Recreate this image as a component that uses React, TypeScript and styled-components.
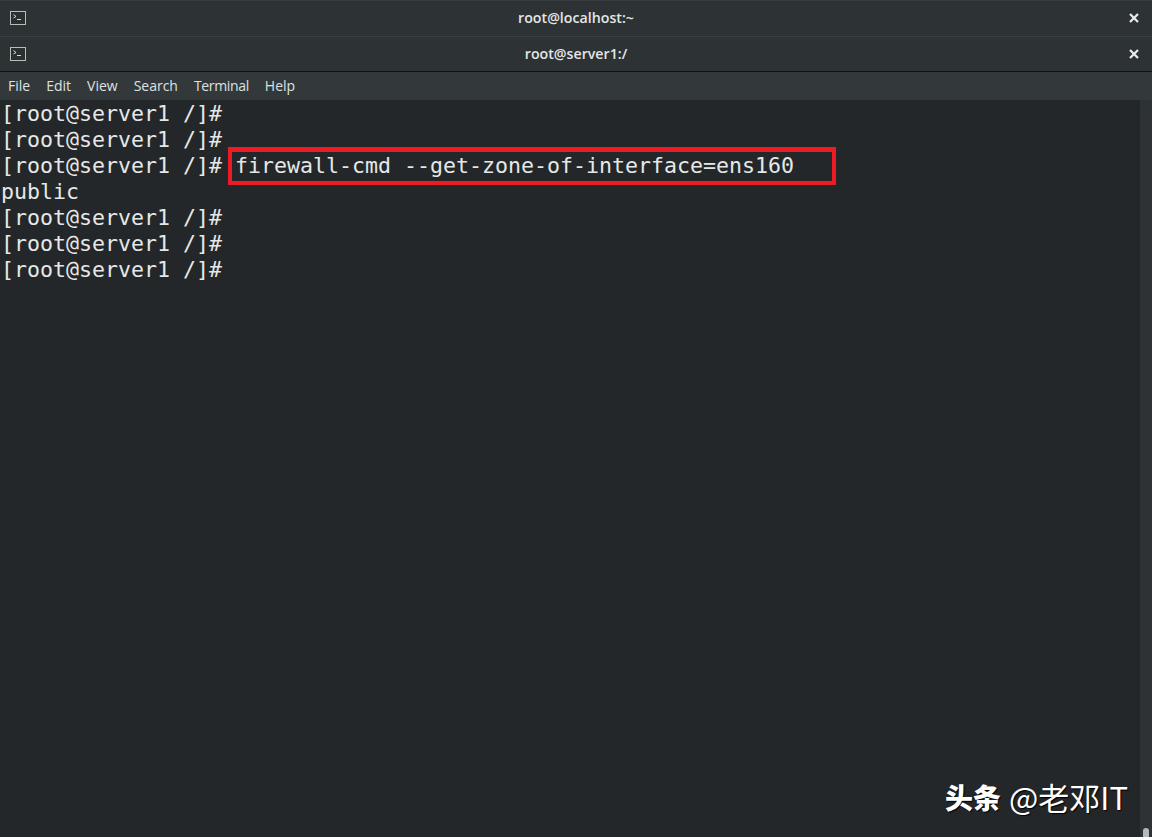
import styled, { createGlobalStyle } from "styled-components";

const Global = createGlobalStyle`
  html, body { margin: 0; padding: 0; background: #232729; }
  #root { height: 837px; overflow: hidden; }
`;

const Page = styled.div`
  width: 1152px;
  height: 837px;
  display: flex;
  flex-direction: column;
  font-family: "Open Sans", "Noto Sans", sans-serif;
  overflow: hidden;
`;

const TitleBar = styled.div<{ $last?: boolean }>`
  height: 36px;
  box-sizing: border-box;
  padding-bottom: 2px;
  flex: none;
  display: flex;
  align-items: center;
  justify-content: center;
  position: relative;
  background: #2d3235;
  border-top: 1px solid ${({ $last }) => ($last ? "#3a3f41" : "#363b3d")};
  border-bottom: ${({ $last }) => ($last ? "1px solid #0f1112" : "none")};
  color: #e4e6e6;
  font-size: 14.2px;
  font-weight: 600;
`;

const AppIcon = styled.svg`
  position: absolute;
  left: 10px;
  top: 9px;
`;

const CloseIcon = styled.svg`
  position: absolute;
  right: 13px;
  top: 12px;
`;

const MenuBar = styled.div`
  height: 28px;
  box-sizing: border-box;
  padding: 0 0 2px 8px;
  flex: none;
  display: flex;
  align-items: center;
  gap: 16px;
  background: #33393b;
  color: #dfe1e1;
  font-size: 14px;
`;

const MenuItem = styled.span<{ $tight?: boolean }>`
  letter-spacing: ${({ $tight }) => ($tight ? "-0.35px" : "0")};
`;

const Body = styled.div`
  flex: 1;
  display: flex;
  min-height: 0;
`;

const Terminal = styled.div`
  flex: 1;
  position: relative;
  background: #232729;
  padding: 1px 0 0 1px;
  color: #e6e8e8;
  font-family: "DejaVu Sans Mono", monospace;
  font-size: 21.6px;
  line-height: 26px;
  white-space: pre;
`;

const Line = styled.div`
  height: 26px;
`;

const Highlight = styled.div`
  position: absolute;
  left: 228px;
  top: 47px;
  width: 608px;
  height: 38px;
  box-sizing: border-box;
  border: 4px solid #ed1c24;
  border-top-width: 5px;
`;

const Scrollbar = styled.div`
  width: 12px;
  flex: none;
  position: relative;
  background: #2d3235;
`;

const Thumb = styled.div`
  position: absolute;
  left: 3px;
  bottom: 0;
  width: 6px;
  height: 9px;
  border-radius: 3px 3px 0 0;
  background: #b6b9ba;
`;

const Watermark = styled.div`
  position: absolute;
  right: 12px;
  bottom: 21px;
  display: flex;
  align-items: center;
  gap: 8px;
  color: #fff;
  font-family: "Noto Sans CJK SC", "Noto Sans", sans-serif;
  font-size: 31px;
  line-height: 38px;
  text-shadow: 1px 1px 1px #000;
`;

const WatermarkBrand = styled.span`
  font-weight: 900;
  font-size: 28px;
`;

const TermIcon = () => (
  <AppIcon width="16" height="15" viewBox="0 0 16 15">
    <rect x="0.5" y="1.5" width="15" height="13" fill="#2a2f30" stroke="#b9bcbc" />
    <path d="M3.5 4.5 L6 6.5 L3.5 8" fill="none" stroke="#d8dad9" strokeWidth="1" />
    <path d="M7 9.5 H11" stroke="#d8dad9" strokeWidth="1" />
  </AppIcon>
);

const Close = () => (
  <CloseIcon width="10" height="10" viewBox="0 0 10 10">
    <path d="M1 1 L9 9 M9 1 L1 9" stroke="#eceeee" strokeWidth="2.2" />
  </CloseIcon>
);

const prompt = "[root@server1 /]#";
const menus = ["File", "Edit", "View", "Search", "Terminal", "Help"];

export default function App() {
  return (
    <Page>
      <Global />
      <TitleBar>
        <TermIcon />
        root@localhost:~
        <Close />
      </TitleBar>
      <TitleBar $last>
        <TermIcon />
        root@server1:/
        <Close />
      </TitleBar>
      <MenuBar>
        {menus.map((m) => (
          <MenuItem key={m} $tight={m === "Terminal"}>{m}</MenuItem>
        ))}
      </MenuBar>
      <Body>
        <Terminal>
          <Line>{prompt}</Line>
          <Line>{prompt}</Line>
          <Line>{prompt} firewall-cmd --get-zone-of-interface=ens160</Line>
          <Line>public</Line>
          <Line>{prompt}</Line>
          <Line>{prompt}</Line>
          <Line>{prompt}</Line>
          <Highlight />
          <Watermark>
            <WatermarkBrand>头条</WatermarkBrand>
            <span>@老邓IT</span>
          </Watermark>
        </Terminal>
        <Scrollbar>
          <Thumb />
        </Scrollbar>
      </Body>
    </Page>
  );
}
